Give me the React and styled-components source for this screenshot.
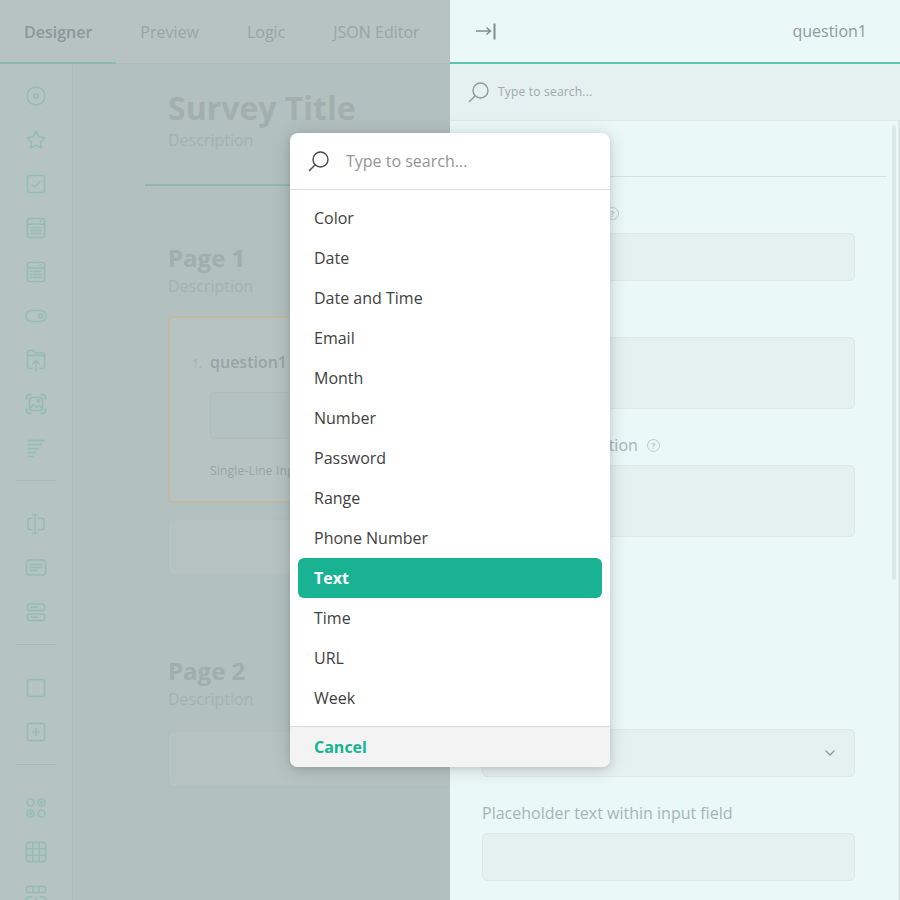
import React from "react";
import styled, { createGlobalStyle } from "styled-components";

const GlobalStyle = createGlobalStyle`
	html, body {
		margin: 0;
		padding: 0;
		background: #b3c1c0;
	}
	* {
		box-sizing: border-box;
	}
`;

const types = ["Color", "Date", "Date and Time", "Email", "Month", "Number", "Password", "Range", "Phone Number", "Text", "Time", "URL", "Week"];

const ruler = (d) => <path d={d} />;

const icons = {
	radio: <><circle cx="12" cy="12" r="9" /><circle cx="12" cy="12" r="2" /></>,
	star: ruler("M12 3.2l2.7 5.6 6.2.9-4.5 4.3 1.1 6.1L12 17.2l-5.5 2.9 1.1-6.1-4.5-4.3 6.2-.9z"),
	check: <><rect x="3.5" y="3.5" width="17" height="17" rx="2" /><path d="M8 12.5l2.5 2.5 5.5-5.5" /></>,
	dropdown: <><rect x="3.5" y="2.5" width="17" height="19" rx="2" /><path d="M3.5 8h17M7 11.5h10M7 14.5h10M7 17.5h10M16 5.3h1" /></>,
	list: <><rect x="3.5" y="2.5" width="17" height="19" rx="2" /><path d="M3.5 8h17M10 11.5h7M10 14.5h7M10 17.5h7M7 11.5h1M7 14.5h1M7 17.5h1M16 5.3h1" /></>,
	toggle: <><rect x="2" y="6.5" width="20" height="11" rx="5.5" /><circle cx="16.5" cy="12" r="2" /></>,
	upload: ruler("M8 20.5H5.5a2 2 0 01-2-2v-14a2 2 0 012-2h4l2 2.5h7a2 2 0 012 2v11.5a2 2 0 01-2 2H16M3.5 7.5h17M12 23v-10M8.5 16l3.5-3.5 3.5 3.5"),
	image: <><path d="M2.5 7V5.5a3 3 0 013-3H7M17 2.500h1.500a3 3 0 013 3V7M2.500 17v1.500a3 3 0 003 3H7M17 21.500h1.500a3 3 0 003-3V17" /><rect x="5.500" y="5.500" width="13" height="13" rx="1" /><circle cx="14.500" cy="9" r="1.300" /><path d="M6 16l3.500-3.500 3 2.500 2-1.500 3.500 2.500" /></>,
	rating: ruler("M4 4.500h16M4 8.500h13.500M4 12.500h10.500M4 16.500h7.500M4 20.500h4.500"),
	cursor: ruler("M8 6.500H6a2 2 0 00-2 2v7a2 2 0 002 2h2M14.500 6.500H18a2 2 0 012 2v7a2 2 0 01-2 2h-3.500M11 3v18M8.500 3h5M8.500 21h5"),
	comment: <><rect x="2.500" y="4" width="19" height="15" rx="3" /><path d="M6.500 8.500h11M6.500 11.500h11M6.500 14.500h6" /></>,
	stack: <><rect x="3.500" y="4" width="17" height="6.500" rx="2" /><rect x="3.500" y="14" width="17" height="6.500" rx="2" /><path d="M7 7.200h6M7 17.200h6" /></>,
	square: <rect x="3.500" y="3.500" width="17" height="17" rx="2" />,
	plus: <><rect x="3.500" y="3.500" width="17" height="17" rx="2" /><path d="M12 8.500v7M8.500 12h7" /></>,
	circles: <><circle cx="6.500" cy="6.500" r="3.500" /><circle cx="17.500" cy="6.500" r="3.500" /><circle cx="17.500" cy="6.500" r="1" /><circle cx="6.500" cy="17.500" r="3.500" /><circle cx="6.500" cy="17.500" r="1" /><circle cx="17.500" cy="17.500" r="3.500" /></>,
	grid: <><rect x="2.500" y="2.500" width="19" height="19" rx="2" /><path d="M8.800 2.500v19M15.200 2.500v19M2.500 8.800h19M2.500 15.200h19" /></>,
	rows: <><rect x="2.500" y="2.500" width="19" height="6" rx="2" /><path d="M9 2.500v6M15 2.500v6M8 13H4.500a2 2 0 00-2 2v4.500a2 2 0 002 2H8M16 13h3.500a2 2 0 012 2v4.500a2 2 0 01-2 2H16M12 14v7M8.500 17.500h7" /></>,
};

const toolGroups = [
	["radio", "star", "check", "dropdown", "list", "toggle", "upload", "image", "rating"],
	["cursor", "comment", "stack"],
	["square", "plus"],
	["circles", "grid", "rows"],
];

const SearchIcon = ({ size = 22, color }) => (
	<svg width={size} height={size} viewBox="0 0 22 22" fill="none" stroke={color} strokeWidth="1.4">
		<circle cx="12.500" cy="9.500" r="7.500" />
		<path d="M7 15L1.500 20.500" strokeLinecap="round" />
	</svg>
);

const HelpIcon = () => (
	<HelpMark>?</HelpMark>
);

function App() {
	return (
		<Page>
			<GlobalStyle />
			<Designer>
				<Tabs>
					<Tab $active>Designer</Tab>
					<Tab>Preview</Tab>
					<Tab>Logic</Tab>
					<Tab>JSON Editor</Tab>
				</Tabs>
				<Workspace>
					<Toolbox>
						{toolGroups.map((group, i) => (
							<ToolGroup key={i}>
								{group.map((name) => (
									<Tool key={name}>
										<svg width="24" height="24" viewBox="0 0 24 24" fill="none" stroke="#93bdb3" strokeWidth="1.500" strokeLinecap="round" strokeLinejoin="round">
											{icons[name]}
										</svg>
									</Tool>
								))}
							</ToolGroup>
						))}
					</Toolbox>
					<Canvas>
						<SurveyHeader>
							<SurveyTitle>Survey Title</SurveyTitle>
							<Description>Description</Description>
						</SurveyHeader>
						<SurveyPage>
							<PageTitle>Page 1</PageTitle>
							<Description>Description</Description>
							<QuestionCard>
								<QuestionTitle><span>1.</span>question1</QuestionTitle>
								<QuestionInput />
								<QuestionType>Single-Line Input</QuestionType>
							</QuestionCard>
							<EmptyCard />
						</SurveyPage>
						<SurveyPage $second>
							<PageTitle>Page 2</PageTitle>
							<Description>Description</Description>
							<EmptyCard $second />
						</SurveyPage>
					</Canvas>
				</Workspace>
			</Designer>

			<Inspector>
				<InspectorBar>
					<svg width="22" height="18" viewBox="0 0 22 18" fill="none" stroke="#7f8f8e" strokeWidth="1.500">
						<path d="M1 9h14M11.500 5.500L15.500 9l-4 3.500" />
						<path d="M19.500 1.500v16" strokeWidth="2" />
					</svg>
					<InspectorName>question1</InspectorName>
				</InspectorBar>
				<InspectorSearch>
					<SearchIcon color="#8b9a99" />
					<span>Type to search...</span>
				</InspectorSearch>
				<InspectorBody>
					<SectionTitle>General</SectionTitle>
					<Field>
						<Label>Question name<HelpIcon /></Label>
						<TextBox />
					</Field>
					<Field>
						<Label>Question title</Label>
						<TextBox $tall />
					</Field>
					<Field>
						<Label>Question description<HelpIcon /></Label>
						<TextBox $tall />
					</Field>
					<Field $hiddenAbove>
						<Label>Input type</Label>
						<TextBox>
							<svg width="10" height="6" viewBox="0 0 10 6" fill="none" stroke="#8a9a99" strokeWidth="1.300">
								<path d="M0.500 0.500L5 5l4.500-4.500" />
							</svg>
						</TextBox>
					</Field>
					<Field>
						<Label>Placeholder text within input field</Label>
						<TextBox />
					</Field>
					<ScrollThumb />
				</InspectorBody>
			</Inspector>

			<Popup>
				<PopupSearch>
					<SearchIcon color="#4a4a4a" />
					<span>Type to search...</span>
				</PopupSearch>
				<PopupList>
					{types.map((type) => (
						<PopupItem key={type} $selected={type === "Text"}>{type}</PopupItem>
					))}
				</PopupList>
				<PopupFooter>Cancel</PopupFooter>
			</Popup>
		</Page>
	);
}

const Page = styled.div`
	position: relative;
	display: flex;
	width: 900px;
	height: 900px;
	overflow: hidden;
	font-family: "Open Sans", sans-serif;
	font-size: 16px;
	line-height: 24px;
`;

const Designer = styled.div`
	display: flex;
	flex-direction: column;
	width: 450px;
	background: #b2c0bf;
`;

const Tabs = styled.div`
	display: flex;
	flex: none;
	height: 64px;
	background: #b6c3c1;
	border-bottom: 1px solid #adbcba;
`;

const Tab = styled.div`
	height: 64px;
	padding: 20px 24px 0;
	white-space: nowrap;
	color: ${(props) => (props.$active ? "#8a9897" : "#98a5a4")};
	font-weight: ${(props) => (props.$active ? 600 : 400)};
	border-bottom: 2px solid ${(props) => (props.$active ? "#90b8ae" : "transparent")};
`;

const Workspace = styled.div`
	display: flex;
	flex: 1;
	min-height: 0;
`;

const Toolbox = styled.div`
	flex: none;
	width: 73px;
	padding-top: 10px;
	background: #b5c3c1;
	border-right: 1px solid #adbcba;
	overflow: hidden;
`;

const ToolGroup = styled.div`
	position: relative;
	padding-bottom: 10px;
	margin-bottom: 11px;
	&::after {
		content: "";
		display: block;
		width: 40px;
		height: 1px;
		margin: 10px 0 0 16px;
		background: #a9b9b7;
	}
`;

const Tool = styled.div`
	display: flex;
	align-items: center;
	justify-content: center;
	width: 72px;
	height: 44px;
`;

const Canvas = styled.div`
	flex: 1;
	min-width: 0;
	overflow: hidden;
`;

const SurveyHeader = styled.div`
	width: 305px;
	height: 122px;
	margin-left: 72px;
	padding: 24px 0 0 23px;
	border-bottom: 2px solid #90b8ae;
`;

const SurveyTitle = styled.div`
	font-size: 32px;
	line-height: 40px;
	font-weight: 700;
	color: #a2afae;
`;

const Description = styled.div`
	color: #a5b2b1;
`;

const SurveyPage = styled.div`
	margin-top: ${(props) => (props.$second ? "80px" : "56px")};
	padding-left: 95px;
`;

const PageTitle = styled.div`
	height: 32px;
	font-size: 24px;
	line-height: 32px;
	font-weight: 700;
	color: #a0aeac;
`;

const QuestionCard = styled.div`
	width: 300px;
	height: 187px;
	margin-top: 18px;
	padding: 32px 0 0 22px;
	background: #b6c3c1;
	border: 2px solid #c1baa1;
	border-radius: 5px;
`;

const QuestionTitle = styled.div`
	font-weight: 600;
	color: #97a4a3;
	span {
		display: inline-block;
		width: 18px;
		font-size: 12px;
		font-weight: 400;
		color: #a5b2b1;
	}
`;

const QuestionInput = styled.div`
	width: 200px;
	height: 47px;
	margin: 16px 0 0 18px;
	background: #b3c1bf;
	border: 1px solid #aebdbb;
	border-radius: 4px;
`;

const QuestionType = styled.div`
	margin: 20px 0 0 18px;
	font-size: 12px;
	color: #97a4a3;
	letter-spacing: 0.2px;
`;

const EmptyCard = styled.div`
	width: 300px;
	height: 56px;
	margin-top: ${(props) => (props.$second ? "20px" : "16px")};
	background: #b6c3c1;
	border: 1px solid #b0bebc;
	border-radius: 5px;
`;

const Inspector = styled.div`
	display: flex;
	flex-direction: column;
	width: 450px;
	background: #ebf8f8;
`;

const InspectorBar = styled.div`
	display: flex;
	flex: none;
	align-items: center;
	justify-content: space-between;
	height: 64px;
	padding: 0 33px 0 25px;
	border-bottom: 2px solid #5cc5b1;
`;

const InspectorName = styled.div`
	color: #8b9c9a;
`;

const InspectorSearch = styled.div`
	display: flex;
	flex: none;
	align-items: center;
	gap: 8px;
	height: 57px;
	padding-left: 18px;
	background: #e5f0f0;
	border-bottom: 1px solid #dce9e8;
	font-size: 12px;
	color: #9cabaa;
	letter-spacing: 0.2px;
`;

const InspectorBody = styled.div`
	position: relative;
	flex: 1;
	min-height: 0;
	padding-left: 32px;
	border-right: 2px solid #dce9e8;
	overflow: hidden;
`;

const SectionTitle = styled.div`
	height: 56px;
	margin: 0 11px 24px -32px;
	padding: 16px 0 0 32px;
	font-weight: 600;
	color: #8b9c9a;
	border-bottom: 1px solid #d4e1e0;
`;

const Field = styled.div`
	margin-top: ${(props) => (props.$hiddenAbove ? "160px" : "0")};
	margin-bottom: 24px;
`;

const Label = styled.div`
	display: flex;
	align-items: center;
	color: #a2b6b8;
`;

const HelpMark = styled.span`
	display: flex;
	align-items: center;
	justify-content: center;
	width: 13px;
	height: 13px;
	margin-left: 9px;
	border: 1px solid #bccbca;
	border-radius: 50%;
	font-size: 9px;
	font-weight: 700;
	line-height: 1;
	color: #bccbca;
`;

const TextBox = styled.div`
	display: flex;
	align-items: center;
	justify-content: flex-end;
	width: 373px;
	height: ${(props) => (props.$tall ? "72px" : "48px")};
	margin-top: 8px;
	padding-right: 19px;
	background: #e5f0f0;
	border: 1px solid #dce9e8;
	border-radius: 5px;
`;

const ScrollThumb = styled.div`
	position: absolute;
	top: 4px;
	right: 2px;
	width: 4px;
	height: 455px;
	border-radius: 2px;
	background: #dde9e8;
`;

const Popup = styled.div`
	position: absolute;
	top: 133px;
	left: 290px;
	display: flex;
	flex-direction: column;
	width: 320px;
	height: 634px;
	background: #fff;
	border-radius: 8px;
	box-shadow: 0 2px 6px rgba(0, 0, 0, 0.1), 0 2px 20px rgba(0, 0, 0, 0.14);
	overflow: hidden;
`;

const PopupSearch = styled.div`
	display: flex;
	flex: none;
	align-items: center;
	gap: 16px;
	height: 57px;
	padding-left: 18px;
	border-bottom: 1px solid #dcdcdc;
	color: #949494;
`;

const PopupList = styled.div`
	flex: 1;
	padding: 8px;
`;

const PopupItem = styled.div`
	height: 40px;
	padding: 8px 16px;
	border-radius: 6px;
	color: ${(props) => (props.$selected ? "#fff" : "#3f3f3f")};
	font-weight: ${(props) => (props.$selected ? 700 : 400)};
	background: ${(props) => (props.$selected ? "#19b394" : "transparent")};
`;

const PopupFooter = styled.div`
	flex: none;
	height: 41px;
	padding: 8px 24px;
	background: #f3f3f3;
	border-top: 1px solid #dcdcdc;
	color: #19b394;
	font-weight: 700;
`;

export default App;
